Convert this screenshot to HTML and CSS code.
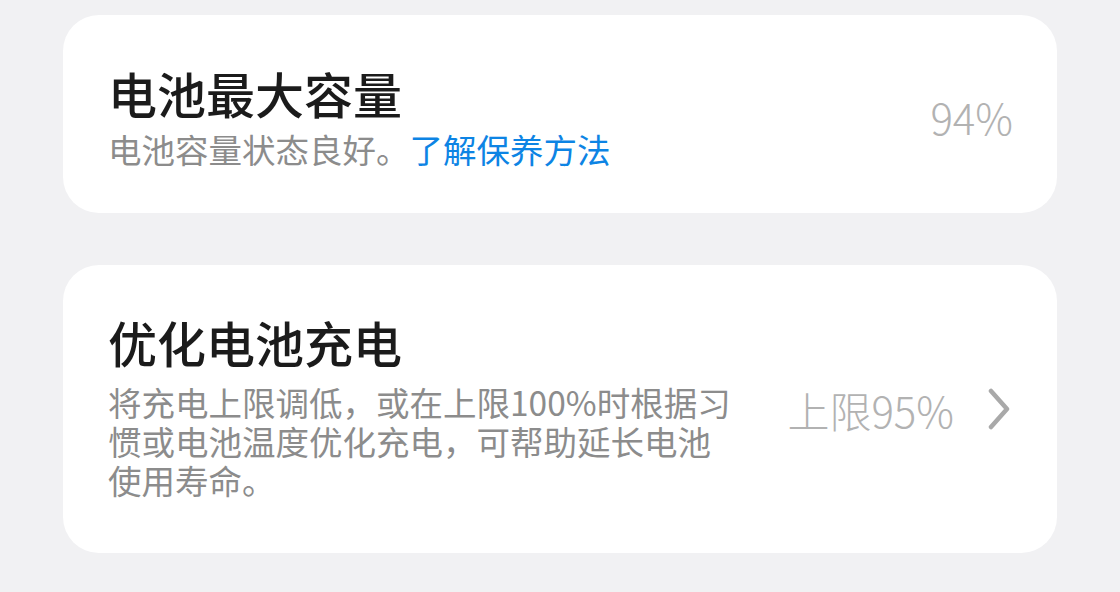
FILE: index.html
```html
<!DOCTYPE html>
<html lang="zh-CN">
<head>
  <meta charset="UTF-8">
  <meta name="viewport" content="width=device-width, initial-scale=1.0">
  <title>电池</title>
  <link rel="stylesheet" href="styles.css">
</head>
<body>
  <div class="settings">
    <div class="card card-capacity">
      <div class="card-text">
        <h3 class="card-title">电池最大容量</h3>
        <p class="card-desc">电池容量状态良好。<a href="#">了解保养方法</a></p>
      </div>
      <div class="card-value">94%</div>
    </div>

    <div class="card card-charge">
      <div class="card-text">
        <h3 class="card-title">优化电池充电</h3>
        <p class="card-desc long">将充电上限调低，或在上限100%时根据习<br>惯或电池温度优化充电，可帮助延长电池<br>使用寿命。</p>
      </div>
      <div class="card-value">
        <span>上限95%</span>
        <svg class="chevron" width="22" height="42" viewBox="0 0 22 42">
          <path d="M3 3 L19 21 L3 39" fill="none" stroke="#a9a9a9" stroke-width="4.5" stroke-linecap="round" stroke-linejoin="round"/>
        </svg>
      </div>
    </div>
  </div>
</body>
</html>
```

FILE: styles.css
```css
body {
  margin: 0;
  padding: 0;
  background-color: #f1f1f3;
  font-family: "Noto Sans CJK SC", "Noto Sans", sans-serif;
}

.settings {
  padding: 15px 63px 0 63px;
  display: flex;
  flex-direction: column;
  gap: 52px;
}

.card {
  background-color: #fff;
  border-radius: 36px;
  display: flex;
  align-items: center;
  justify-content: space-between;
}

.card-capacity {
  height: 198px;
  padding: 0 44px 0 45px;
  box-sizing: border-box;
}

.card-charge {
  height: 288px;
  padding: 0 47px 0 45px;
  box-sizing: border-box;
}

.card-title {
  margin: 0;
  font-size: 49px;
  line-height: 60px;
  font-weight: 500;
  color: #1b1b1b;
}

.card-capacity .card-text {
  margin-top: 2px;
}

.card-charge .card-text {
  margin-top: -8px;
}

.card-desc {
  margin: 6px 0 0;
  font-size: 33.5px;
  line-height: 39px;
  color: #8c8c8c;
}

.card-desc.long {
  margin-top: 10px;
}

.card-desc a {
  color: #0d84e4;
  text-decoration: none;
}

.card-value {
  display: flex;
  align-items: center;
  gap: 34px;
  font-size: 42px;
  font-weight: 300;
  color: #b2b2b2;
}

.card-capacity .card-value {
  margin-top: 4px;
}

.chevron {
  display: block;
}
```
